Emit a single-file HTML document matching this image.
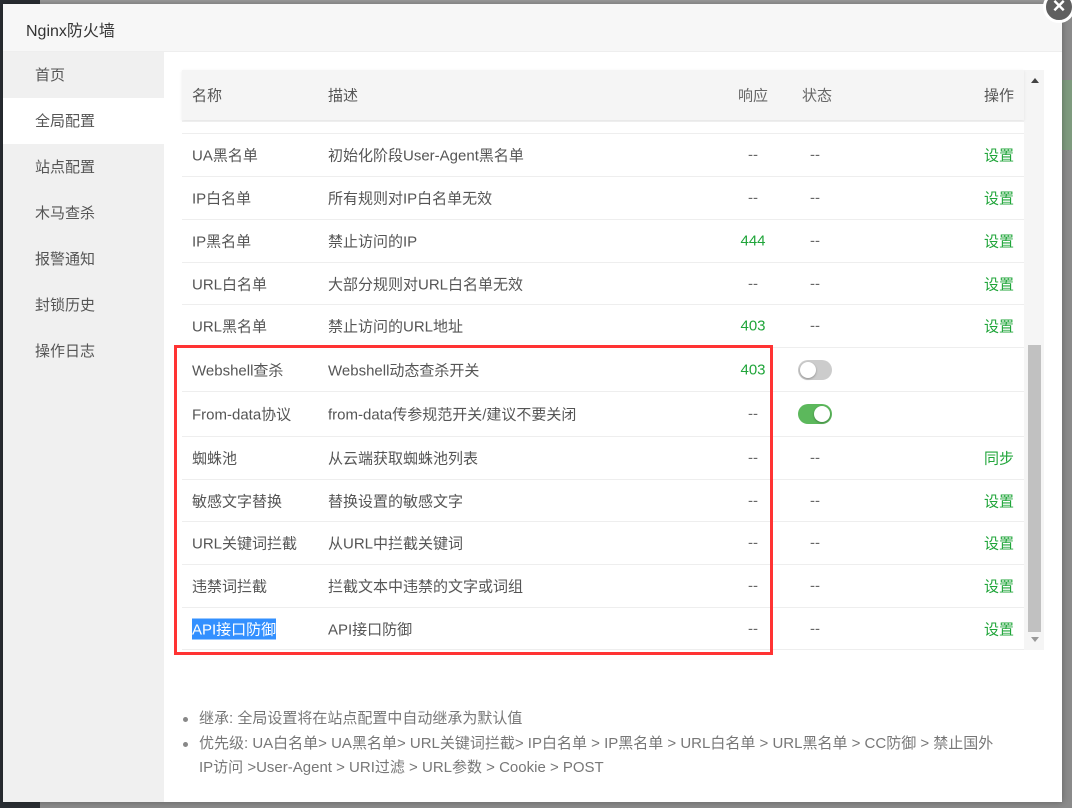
<!DOCTYPE html>
<html><head><meta charset="utf-8"><style>
*{margin:0;padding:0;box-sizing:border-box}
body{width:1072px;height:808px;overflow:hidden;position:relative;background:#8a8a8a;font-family:"Liberation Sans","Noto Sans CJK SC",sans-serif;font-size:15px;color:#666}
.a{position:absolute}
.row{position:absolute;left:182px;width:842px;border-top:1px solid #eee;background:#fff}
.row span{position:absolute;top:50%;transform:translateY(-50%);white-space:nowrap}
.c1{left:10px;color:#555}.c2{left:146px;color:#555}.c3{left:556px;width:30px;text-align:center}.c4{left:628px}.c5{right:10px;color:#20a53a}
.g{color:#20a53a}
.tg{position:absolute;left:616px;top:50%;margin-top:-10px;width:34px;height:20px;border-radius:10px}
.tg i{position:absolute;top:2px;width:16px;height:16px;border-radius:50%;background:#fff;box-shadow:0 1px 2px rgba(0,0,0,.3)}
</style></head><body>
<div class="a" style="left:0;top:0;width:40px;height:808px;background:#2a2e33"></div>
<div class="a" style="left:40px;top:0;width:1032px;height:4px;background:#9a9a9a"></div>
<div class="a" style="left:1062px;top:80px;width:10px;height:70px;background:#7e9a7e"></div>
<div class="a" style="left:3px;top:4px;width:1059px;height:798px;background:#fff;box-shadow:0 0 6px rgba(0,0,0,.3)"></div>
<div class="a" style="left:3px;top:4px;width:1059px;height:48px;background:#f7f7f7;border-bottom:1px solid #eee;"></div>
<div class="a" style="left:26px;top:17px;font-size:16px;color:#333">Nginx防火墙</div>
<div class="a" style="left:3px;top:52px;width:161px;height:750px;background:#f0f0f0"></div>
<div class="a" style="left:3px;top:98px;width:161px;height:46px;background:#fff"></div>
<div class="a" style="left:35px;top:61px;line-height:30px;color:#555;font-size:15px">
<div style="height:46px">首页</div><div style="height:46px">全局配置</div><div style="height:46px">站点配置</div><div style="height:46px">木马查杀</div><div style="height:46px">报警通知</div><div style="height:46px">封锁历史</div><div style="height:46px">操作日志</div></div>
<div class="a" style="left:182px;top:70px;width:862px;height:580px;background:#f5f5f5"></div>
<div class="row" style="top:70px;height:50px;background:#f5f5f5;border:none;box-shadow:0 1px 3px rgba(0,0,0,.08)"><span class="c1">名称</span><span class="c2">描述</span><span class="c3" style="width:auto;left:556px">响应</span><span class="c4" style="left:620px">状态</span><span style="right:10px;color:#555">操作</span></div>
<div class="row" style="top:121px;height:12px"></div>
<div class="row" style="top:133px;height:43px"><span class="c1">UA黑名单</span><span class="c2">初始化阶段User-Agent黑名单</span><span class="c3">--</span><span class="c4">--</span><span class="c5">设置</span></div>
<div class="row" style="top:176px;height:43px"><span class="c1">IP白名单</span><span class="c2">所有规则对IP白名单无效</span><span class="c3">--</span><span class="c4">--</span><span class="c5">设置</span></div>
<div class="row" style="top:219px;height:43px"><span class="c1">IP黑名单</span><span class="c2">禁止访问的IP</span><span class="c3 g">444</span><span class="c4">--</span><span class="c5">设置</span></div>
<div class="row" style="top:262px;height:42px"><span class="c1">URL白名单</span><span class="c2">大部分规则对URL白名单无效</span><span class="c3">--</span><span class="c4">--</span><span class="c5">设置</span></div>
<div class="row" style="top:304px;height:43px"><span class="c1">URL黑名单</span><span class="c2">禁止访问的URL地址</span><span class="c3 g">403</span><span class="c4">--</span><span class="c5">设置</span></div>
<div class="row" style="top:347px;height:44px"><span class="c1">Webshell查杀</span><span class="c2">Webshell动态查杀开关</span><span class="c3 g">403</span><div class="tg" style="background:#ccc"><i style="left:2px"></i></div></div>
<div class="row" style="top:391px;height:45px"><span class="c1">From-data协议</span><span class="c2">from-data传参规范开关/建议不要关闭</span><span class="c3">--</span><div class="tg" style="background:#5cb85c"><i style="left:16px"></i></div></div>
<div class="row" style="top:436px;height:43px"><span class="c1">蜘蛛池</span><span class="c2">从云端获取蜘蛛池列表</span><span class="c3">--</span><span class="c4">--</span><span class="c5">同步</span></div>
<div class="row" style="top:479px;height:42px"><span class="c1">敏感文字替换</span><span class="c2">替换设置的敏感文字</span><span class="c3">--</span><span class="c4">--</span><span class="c5">设置</span></div>
<div class="row" style="top:521px;height:43px"><span class="c1">URL关键词拦截</span><span class="c2">从URL中拦截关键词</span><span class="c3">--</span><span class="c4">--</span><span class="c5">设置</span></div>
<div class="row" style="top:564px;height:43px"><span class="c1">违禁词拦截</span><span class="c2">拦截文本中违禁的文字或词组</span><span class="c3">--</span><span class="c4">--</span><span class="c5">设置</span></div>
<div class="row" style="top:607px;height:43px;border-bottom:1px solid #eee"><span class="c1" style="background:#3390ff;color:#fff">API接口防御</span><span class="c2">API接口防御</span><span class="c3">--</span><span class="c4">--</span><span class="c5">设置</span></div>
<div class="a" style="left:1028px;top:345px;width:13px;height:287px;background:#c1c1c1"></div>
<div class="a" style="left:1031px;top:78px;width:0;height:0;border-left:4px solid transparent;border-right:4px solid transparent;border-bottom:5px solid #444"></div>
<div class="a" style="left:1031px;top:637px;width:0;height:0;border-left:4px solid transparent;border-right:4px solid transparent;border-top:5px solid #999"></div>
<div class="a" style="left:174px;top:345px;width:599px;height:310px;border:3px solid #f33"></div>
<div class="a" style="left:182px;top:707px;width:860px;line-height:24.5px;color:#777;white-space:nowrap">
<div style="position:relative;padding-left:17px"><b style="position:absolute;left:1px;top:10px;width:5px;height:5px;border-radius:50%;background:#888"></b>继承: 全局设置将在站点配置中自动继承为默认值</div>
<div style="position:relative;padding-left:17px"><b style="position:absolute;left:1px;top:10px;width:5px;height:5px;border-radius:50%;background:#888"></b>优先级: UA白名单&gt; UA黑名单&gt; URL关键词拦截&gt; IP白名单 &gt; IP黑名单 &gt; URL白名单 &gt; URL黑名单 &gt; CC防御 &gt; 禁止国外<br>IP访问 &gt;User-Agent &gt; URI过滤 &gt; URL参数 &gt; Cookie &gt; POST</div>
</div>
<div class="a" style="left:1043px;top:-9px;width:32px;height:32px;border-radius:50%;background:#5f5f5f;border:3px solid #fff;color:#fff;font-size:22px;line-height:24px;text-align:center;font-weight:bold">×</div>
</body></html>
